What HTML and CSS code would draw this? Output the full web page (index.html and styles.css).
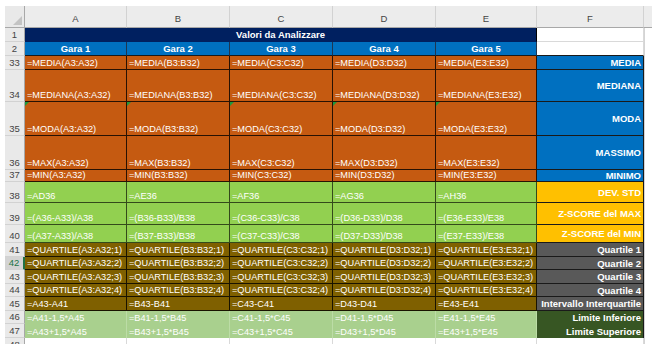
FILE: index.html
```html
<!DOCTYPE html>
<html>
<head>
<meta charset="utf-8">
<title>Valori da Analizzare</title>
<link rel="stylesheet" href="styles.css">
</head>
<body>
<div class="sheet">
  <div class="corner"><span class="tri"></span></div>
  <div class="ch">A</div><div class="ch">B</div><div class="ch">C</div><div class="ch">D</div><div class="ch">E</div><div class="ch">F</div><div class="ch rest-h"></div>

  <div class="rh">1</div><div class="title">Valori da Analizzare</div><div class="blank"></div><div class="rest"></div>

  <div class="rh">2</div>
  <div class="gara">Gara 1</div><div class="gara">Gara 2</div><div class="gara">Gara 3</div><div class="gara">Gara 4</div><div class="gara">Gara 5</div>
  <div class="blank b2"></div><div class="rest"></div>

  <div class="rh">33</div>
  <div class="c or">=MEDIA(A3:A32)</div><div class="c or">=MEDIA(B3:B32)</div><div class="c or">=MEDIA(C3:C32)</div><div class="c or">=MEDIA(D3:D32)</div><div class="c or">=MEDIA(E3:E32)</div>
  <div class="lab blue">MEDIA</div><div class="rest"></div>

  <div class="rh">34</div>
  <div class="c or">=MEDIANA(A3:A32)</div><div class="c or">=MEDIANA(B3:B32)</div><div class="c or">=MEDIANA(C3:C32)</div><div class="c or">=MEDIANA(D3:D32)</div><div class="c or">=MEDIANA(E3:E32)</div>
  <div class="lab blue">MEDIANA</div><div class="rest"></div>

  <div class="rh">35</div>
  <div class="c or warn">=MODA(A3:A32)</div><div class="c or warn">=MODA(B3:B32)</div><div class="c or warn">=MODA(C3:C32)</div><div class="c or warn">=MODA(D3:D32)</div><div class="c or warn">=MODA(E3:E32)</div>
  <div class="lab blue">MODA</div><div class="rest"></div>

  <div class="rh">36</div>
  <div class="c or">=MAX(A3:A32)</div><div class="c or">=MAX(B3:B32)</div><div class="c or">=MAX(C3:C32)</div><div class="c or">=MAX(D3:D32)</div><div class="c or">=MAX(E3:E32)</div>
  <div class="lab blue">MASSIMO</div><div class="rest"></div>

  <div class="rh">37</div>
  <div class="c or">=MIN(A3:A32)</div><div class="c or">=MIN(B3:B32)</div><div class="c or">=MIN(C3:C32)</div><div class="c or">=MIN(D3:D32)</div><div class="c or">=MIN(E3:E32)</div>
  <div class="lab blue">MINIMO</div><div class="rest"></div>

  <div class="rh">38</div>
  <div class="c gr">=AD36</div><div class="c gr">=AE36</div><div class="c gr">=AF36</div><div class="c gr">=AG36</div><div class="c gr">=AH36</div>
  <div class="lab gold">DEV. STD</div><div class="rest"></div>

  <div class="rh">39</div>
  <div class="c gr">=(A36-A33)/A38</div><div class="c gr">=(B36-B33)/B38</div><div class="c gr">=(C36-C33)/C38</div><div class="c gr">=(D36-D33)/D38</div><div class="c gr">=(E36-E33)/E38</div>
  <div class="lab gold">Z-SCORE del MAX</div><div class="rest"></div>

  <div class="rh">40</div>
  <div class="c gr">=(A37-A33)/A38</div><div class="c gr">=(B37-B33)/B38</div><div class="c gr">=(C37-C33)/C38</div><div class="c gr">=(D37-D33)/D38</div><div class="c gr">=(E37-E33)/E38</div>
  <div class="lab gold">Z-SCORE del MIN</div><div class="rest"></div>

  <div class="rh">41</div>
  <div class="c br">=QUARTILE(A3:A32;1)</div><div class="c br">=QUARTILE(B3:B32;1)</div><div class="c br">=QUARTILE(C3:C32;1)</div><div class="c br">=QUARTILE(D3:D32;1)</div><div class="c br">=QUARTILE(E3:E32;1)</div>
  <div class="lab grey">Quartile 1</div><div class="rest"></div>

  <div class="rh active">42</div>
  <div class="c br">=QUARTILE(A3:A32;2)</div><div class="c br">=QUARTILE(B3:B32;2)</div><div class="c br">=QUARTILE(C3:C32;2)</div><div class="c br">=QUARTILE(D3:D32;2)</div><div class="c br">=QUARTILE(E3:E32;2)</div>
  <div class="lab grey">Quartile 2</div><div class="rest"></div>

  <div class="rh">43</div>
  <div class="c br">=QUARTILE(A3:A32;3)</div><div class="c br">=QUARTILE(B3:B32;3)</div><div class="c br">=QUARTILE(C3:C32;3)</div><div class="c br">=QUARTILE(D3:D32;3)</div><div class="c br">=QUARTILE(E3:E32;3)</div>
  <div class="lab grey">Quartile 3</div><div class="rest"></div>

  <div class="rh">44</div>
  <div class="c br">=QUARTILE(A3:A32;4)</div><div class="c br">=QUARTILE(B3:B32;4)</div><div class="c br">=QUARTILE(C3:C32;4)</div><div class="c br">=QUARTILE(D3:D32;4)</div><div class="c br">=QUARTILE(E3:E32;4)</div>
  <div class="lab grey">Quartile 4</div><div class="rest"></div>

  <div class="rh">45</div>
  <div class="c br">=A43-A41</div><div class="c br">=B43-B41</div><div class="c br">=C43-C41</div><div class="c br">=D43-D41</div><div class="c br">=E43-E41</div>
  <div class="lab grey">Intervallo Interquartile</div><div class="rest"></div>

  <div class="rh">46</div>
  <div class="c lg">=A41-1,5*A45</div><div class="c lg">=B41-1,5*B45</div><div class="c lg">=C41-1,5*C45</div><div class="c lg">=D41-1,5*D45</div><div class="c lg">=E41-1,5*E45</div>
  <div class="lab dg">Limite Inferiore</div><div class="rest"></div>

  <div class="rh">47</div>
  <div class="c lg">=A43+1,5*A45</div><div class="c lg">=B43+1,5*B45</div><div class="c lg">=C43+1,5*C45</div><div class="c lg">=D43+1,5*D45</div><div class="c lg">=E43+1,5*E45</div>
  <div class="lab dg">Limite Superiore</div><div class="rest"></div>

  <div class="rh">48</div>
  <div class="e"></div><div class="e"></div><div class="e"></div><div class="e"></div><div class="e"></div><div class="e"></div><div class="rest"></div>
</div>
</body>
</html>
```

FILE: styles.css
```css
html, body {
  margin: 0;
  padding: 0;
  background: #ffffff;
  overflow: hidden;
}

body {
  width: 652px;
  height: 344px;
  font-family: "Liberation Sans", Arial, sans-serif;
}

.sheet {
  display: grid;
  grid-template-columns: 20px 102px 103px 103px 103px 101px 107px 1fr;
  grid-template-rows: 22px 14px 14px 14px 32px 34px 34px 12px 21px 22px 18px 14px 13px 14px 13px 14px 13px 14px 14px;
  margin: 6px 0 0 5px;
  width: 647px;
}

.sheet > div {
  box-sizing: border-box;
  min-width: 0;
  white-space: nowrap;
  overflow: hidden;
}

/* headers */
.corner {
  background: #e9e9e9;
  border-right: 1px solid #a8a8a8;
  border-bottom: 1px solid #a8a8a8;
  position: relative;
}
.tri {
  position: absolute;
  right: 2px;
  bottom: 2px;
  width: 0;
  height: 0;
  border-left: 9px solid transparent;
  border-bottom: 9px solid #c3c3c3;
}

.ch {
  background: #ececec;
  border-right: 1px solid #d2d2d2;
  border-bottom: 1px solid #a8a8a8;
  color: #444;
  font-size: 9.5px;
  display: flex;
  align-items: flex-end;
  justify-content: center;
  padding-bottom: 3px;
}
.rest-h {
  border-right: none;
}

.rh {
  background: #e9e9e9;
  border-right: 1px solid #a8a8a8;
  border-bottom: 1px solid #d2d2d2;
  color: #444;
  font-size: 9.5px;
  display: flex;
  align-items: flex-end;
  justify-content: center;
  padding-bottom: 0;
  line-height: 12px;
}
.rh.active {
  background: #d3d3d3;
  color: #217346;
  border-right: 2px solid #217346;
}

/* title rows */
.title {
  grid-column: span 5;
  background: #002060;
  color: #fff;
  font-weight: bold;
  font-size: 9.5px;
  display: flex;
  align-items: center;
  justify-content: center;
  border-bottom: 1px solid #002060;
  border-right: 1px solid #000;
}

.gara {
  background: #0070c0;
  color: #fff;
  font-weight: bold;
  font-size: 9.5px;
  display: flex;
  align-items: center;
  justify-content: center;
  border-right: 1px solid #1f3550;
  border-bottom: 1px solid #1a1a1a;
}

.blank {
  background: #fff;
  border-right: 1px solid #d9d9d9;
  border-bottom: 1px solid #d9d9d9;
}
.blank.b2 {
  border-bottom: 1px solid #1a1a1a;
}

.rest {
  background: #fff;
  border-left: 1px solid #d4d4d4;
}

.e {
  background: #fff;
  border-right: 1px solid #d9d9d9;
}

/* data cells */
.c {
  color: #fff;
  font-size: 9.2px;
  display: flex;
  align-items: flex-end;
  padding: 0 2px 0 2px;
  line-height: 12px;
  border-right: 1px solid rgba(0, 0, 0, 0.8);
  border-bottom: 1px solid rgba(0, 0, 0, 0.8);
}

.or { background: #c55a11; }
.gr { background: #92d050; border-color: rgba(20, 30, 10, 0.75); }
.br { background: #7f6000; border-color: rgba(0, 0, 0, 0.8); }
.lg {
  background: #a9d08e;
  border-right: 1px solid #bcdca6;
  border-bottom: none;
}

.warn {
  position: relative;
}
.warn::before {
  content: "";
  position: absolute;
  left: 0;
  top: 0;
  width: 0;
  height: 0;
  border-top: 4px solid #1e9a3c;
  border-right: 4px solid transparent;
}

/* labels in column F */
.lab {
  color: #fff;
  font-weight: bold;
  font-size: 9.5px;
  display: flex;
  align-items: center;
  justify-content: flex-end;
  padding: 0 2px 0 2px;
  border-right: 1px solid #1a1a1a;
  border-bottom: 1px solid #1a1a1a;
}

.blue { background: #0070c0; }
.gold { background: #ffc000; }
.grey { background: #595959; }
.dg {
  background: #375623;
  border-bottom: none;
}
```
